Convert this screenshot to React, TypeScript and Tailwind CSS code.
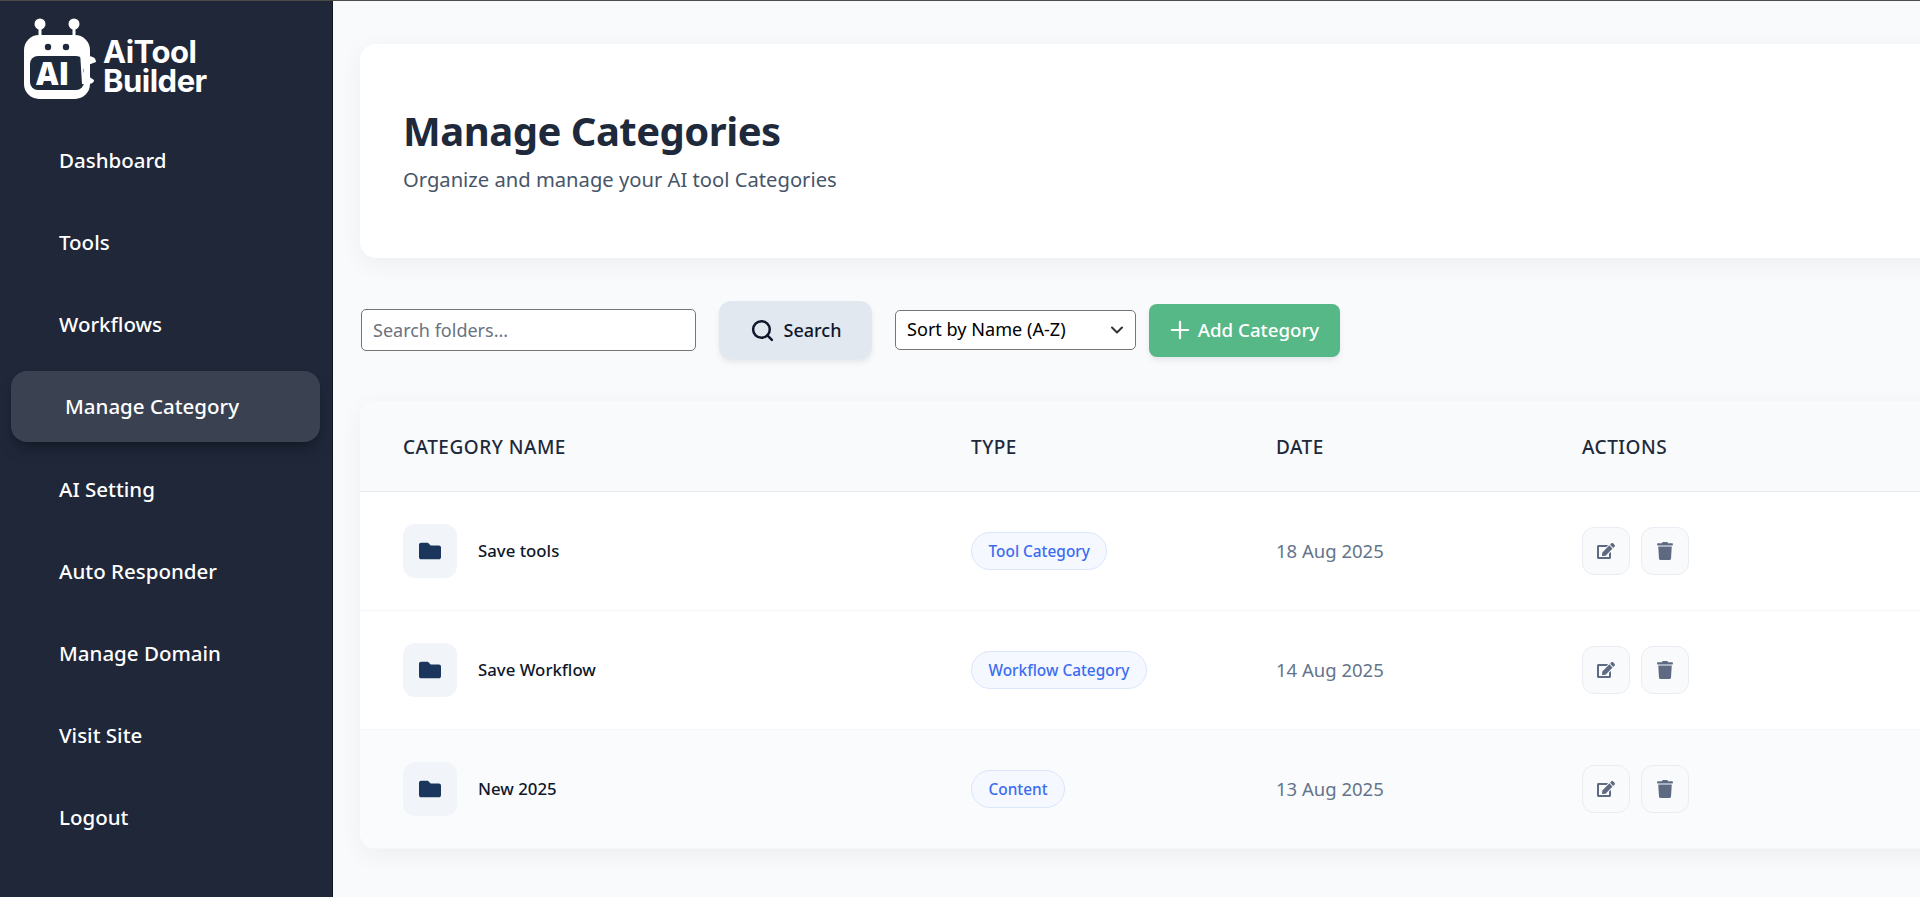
import { Plus, ChevronDown, Search } from "lucide-react";
import { FaFolder, FaEdit, FaTrash } from "react-icons/fa";

const navItems = ["Dashboard", "Tools", "Workflows", "Manage Category", "AI Setting", "Auto Responder", "Manage Domain", "Visit Site", "Logout"];

const rows = [
  { name: "Save tools", type: "Tool Category", date: "18 Aug 2025", h: "h-[119px]" },
  { name: "Save Workflow", type: "Workflow Category", date: "14 Aug 2025", h: "h-[119px]" },
  { name: "New 2025", type: "Content", date: "13 Aug 2025", h: "h-[119px]", alt: true },
];

const Logo = () => (
  <div className="flex items-center gap-[5px]">
    <svg width="74" height="82" viewBox="0 0 74 82">
      <circle cx="16" cy="6" r="5.5" fill="#fff" />
      <circle cx="50" cy="6" r="5.5" fill="#fff" />
      <rect x="14.5" y="8" width="3" height="12" fill="#fff" />
      <rect x="48.5" y="8" width="3" height="12" fill="#fff" />
      <rect x="0" y="17" width="66" height="64" rx="15" fill="#fff" />
      <circle cx="24" cy="29" r="3.2" fill="#1e293b" />
      <circle cx="42" cy="29" r="3.2" fill="#1e293b" />
      <rect x="6" y="38" width="54" height="34" rx="8" fill="#1e293b" />
      <path d="M56 34 C62 40 72 36 72 44 L64 47 C58 47 58 58 64 58 L70 62 C70 67 62 66 58 66 Z" fill="#fff" />
      <text x="12" y="67" fontFamily="'Open Sans', sans-serif" fontWeight="800" fontSize="31" fill="#fff">AI</text>
    </svg>
    <div className="mt-[14px] font-['Inter',sans-serif] text-[31px] font-bold leading-[29px] tracking-[-0.5px] text-white">
      <div>AiTool</div>
      <div>Builder</div>
    </div>
  </div>
);

export default function App() {
  return (
    <div className="flex h-[897px] w-[1920px] overflow-hidden border-t border-t-[#4b4b47] bg-[#f9fafb] font-['Noto_Sans',sans-serif]">
      <aside className="flex w-[333px] shrink-0 flex-col border-r border-r-[#111827] bg-[#1f2739]">
        <div className="pl-6 pt-[17px]">
          <Logo />
        </div>
        <nav className="mt-[19px] flex flex-col pl-[11px] pr-[12px]">
          {navItems.map((item) =>
            item === "Manage Category" ? (
              <a key={item} className="my-[6px] flex h-[71px] items-center rounded-2xl bg-[#3a4252] pl-[54px] text-[20.5px] font-medium text-white shadow-lg shadow-black/25">
                {item}
              </a>
            ) : (
              <a key={item} className="flex h-[82px] items-center pl-[48px] text-[20.5px] font-medium text-white">
                {item}
              </a>
            )
          )}
        </nav>
      </aside>

      <main className="min-w-0 flex-1 pl-[27px] pt-[43px]">
        <div className="flex h-[214px] w-[1600px] flex-col justify-center rounded-2xl bg-white pb-[4px] pl-[43px] shadow-[0_6px_24px_rgba(0,0,0,0.05)]">
          <h1 className="text-[40px] font-bold leading-[54px] tracking-[-0.5px] text-[#1e293b]">Manage Categories</h1>
          <p className="mt-[6px] text-[20.2px] leading-[30px] text-[#475569]">Organize and manage your AI tool Categories</p>
        </div>

        <div className="mt-[43px] flex items-center">
          <input
            placeholder="Search folders..."
            className="ml-[1px] h-[42px] w-[335px] rounded-[5px] border border-[#767676] bg-white px-[11px] text-[18px] text-black placeholder:text-[#6b7280]"
          />
          <button className="ml-[23px] flex h-[58px] w-[153px] items-center justify-center gap-[9px] rounded-xl bg-[#e2e8f0] text-[18px] font-medium text-[#0f172a] shadow-md shadow-gray-200">
            <Search size={25} strokeWidth={2.4} />
            Search
          </button>
          <div className="relative ml-[23px] flex h-[40px] w-[241px] items-center rounded-[5px] border border-[#767676] bg-white pl-[11px] text-[18.1px] text-black">
            Sort by Name (A-Z)
            <ChevronDown size={20} strokeWidth={2.4} className="absolute right-[8px] top-[9px] text-[#333]" />
          </div>
          <button className="ml-[13px] flex h-[53px] w-[191px] items-center justify-center gap-[4px] rounded-lg bg-[#56b886] pr-[4px] text-[18.7px] font-medium text-white shadow-md shadow-gray-200">
            <Plus size={28} strokeWidth={1.9} />
            Add Category
          </button>
        </div>

        <div className="mt-[42px] w-[1600px] overflow-hidden rounded-2xl bg-white shadow-[0_6px_24px_rgba(0,0,0,0.05)]">
          <div className="flex h-[91px] items-center border-b border-b-[#e8ecf1] bg-[#f8fafc] pl-[43px] pt-[2px] text-[19px] font-medium tracking-[0.5px] text-[#1e293b]">
            <div className="w-[568px]">CATEGORY NAME</div>
            <div className="w-[305px]">TYPE</div>
            <div className="w-[306px]">DATE</div>
            <div>ACTIONS</div>
          </div>
          {rows.map((row) => (
            <div key={row.name} className={`flex items-center border-b border-b-[#f4f6f9] pl-[43px] ${row.h} ${row.alt ? "bg-[#fafbfd]" : "bg-white"}`}>
              <div className="flex w-[568px] items-center gap-[21px]">
                <div className="flex h-[54px] w-[54px] items-center justify-center rounded-xl bg-[#f1f5f9]">
                  <FaFolder size={22} className="text-[#1a365d]" />
                </div>
                <span className="text-[16.8px] font-medium text-[#0f172a]">{row.name}</span>
              </div>
              <div className="w-[305px]">
                <span className="inline-flex h-[38px] items-center rounded-full border border-[#dbe6fb] bg-[#f5f8ff] px-[16.5px] pt-[1px] text-[15.4px] font-medium text-[#3b6cf0]">
                  {row.type}
                </span>
              </div>
              <div className="w-[306px] text-[18.5px] text-[#64748b]">{row.date}</div>
              <div className="flex gap-[11px]">
                <button className="flex h-[48px] w-[48px] items-center justify-center rounded-xl border border-[#e9edf3] bg-[#f8fafc] text-[#5d6a82]">
                  <FaEdit size={18} />
                </button>
                <button className="flex h-[48px] w-[48px] items-center justify-center rounded-xl border border-[#e9edf3] bg-[#f8fafc] text-[#5d6a82]">
                  <FaTrash size={18} />
                </button>
              </div>
            </div>
          ))}
        </div>
      </main>
    </div>
  );
}
